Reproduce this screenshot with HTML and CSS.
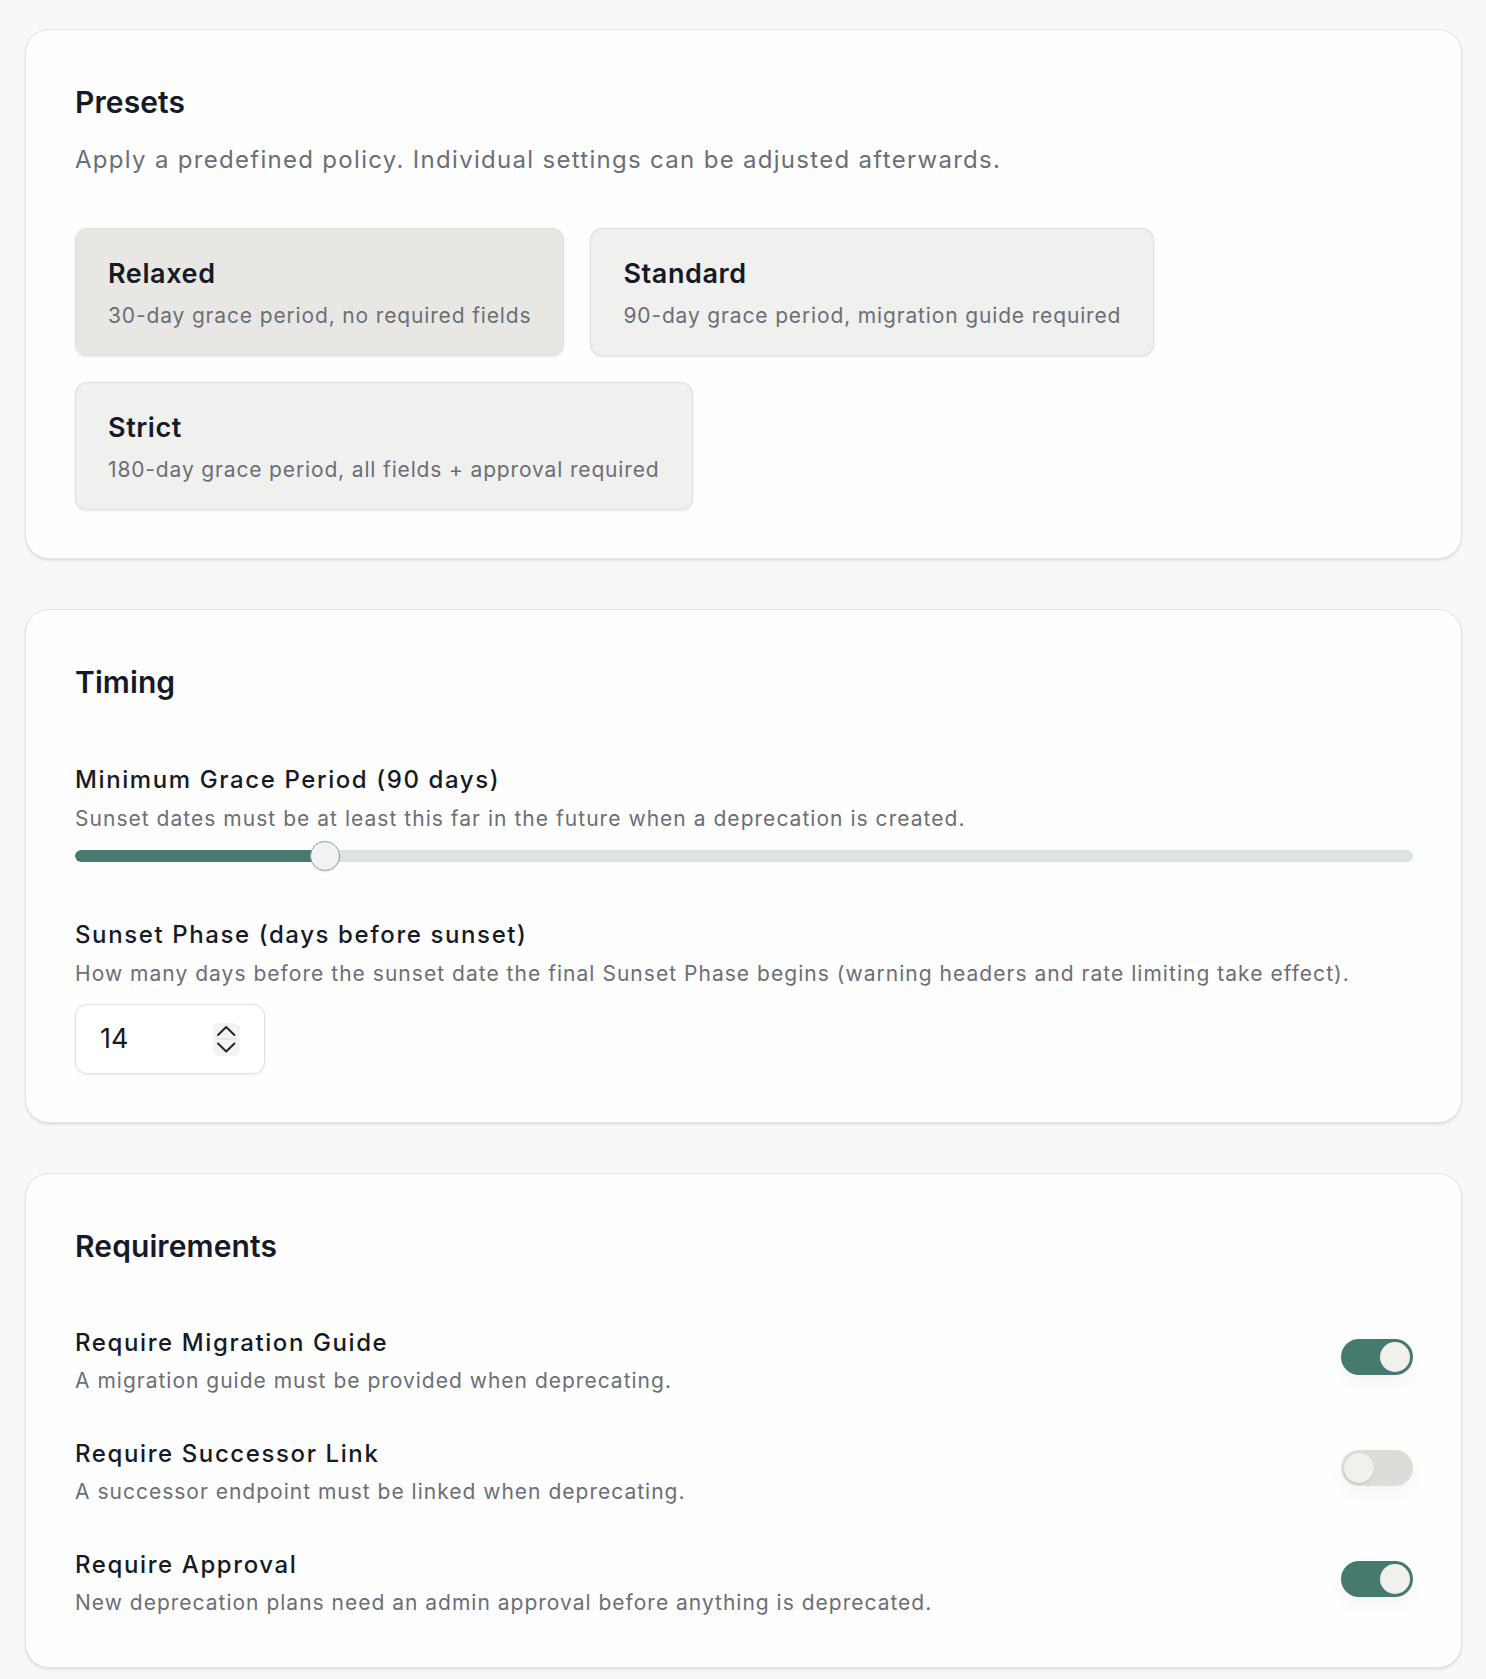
FILE: index.html
```html
<!DOCTYPE html>
<html lang="en">
<head>
<meta charset="utf-8">
<title>Deprecation policy</title>
<link rel="stylesheet" href="styles.css">
</head>
<body>
<main class="page">
  <section class="card">
    <h2 class="card-title">Presets</h2>
    <p class="card-desc">Apply a predefined policy. Individual settings can be adjusted afterwards.</p>
    <div class="presets">
      <button class="preset is-active" type="button">
        <span class="preset-name">Relaxed</span>
        <span class="preset-desc">30-day grace period, no required fields</span>
      </button>
      <button class="preset" type="button">
        <span class="preset-name">Standard</span>
        <span class="preset-desc">90-day grace period, migration guide required</span>
      </button>
      <button class="preset" type="button">
        <span class="preset-name">Strict</span>
        <span class="preset-desc">180-day grace period, all fields + approval required</span>
      </button>
    </div>
  </section>

  <section class="card">
    <h2 class="card-title">Timing</h2>
    <div class="fields">
      <div class="field">
        <div class="field-label">Minimum Grace Period (90 days)</div>
        <div class="field-desc">Sunset dates must be at least this far in the future when a deprecation is created.</div>
        <div class="slider">
          <div class="track"><div class="fill" style="width: 18.7%"></div></div>
          <div class="thumb" style="left: calc(18.7% - 15px)"></div>
        </div>
      </div>
      <div class="field">
        <div class="field-label">Sunset Phase (days before sunset)</div>
        <div class="field-desc">How many days before the sunset date the final Sunset Phase begins (warning headers and rate limiting take effect).</div>
        <div class="number-input">
          <span class="number-value">14</span>
          <span class="spinner">
            <svg width="27" height="33" viewBox="0 0 27 33" aria-hidden="true">
              <path d="M5 12 L13.2 4 L21.4 12" fill="none" stroke="#23262f" stroke-width="2" stroke-linecap="round" stroke-linejoin="round"/>
              <path d="M3.5 16 H23.5" stroke="#dedede" stroke-width="1"/>
              <path d="M5 20.5 L13.2 28.5 L21.4 20.5" fill="none" stroke="#23262f" stroke-width="2" stroke-linecap="round" stroke-linejoin="round"/>
            </svg>
          </span>
        </div>
      </div>
    </div>
  </section>

  <section class="card">
    <h2 class="card-title">Requirements</h2>
    <div class="rows">
      <div class="toggle-row">
        <div class="row-text">
          <div class="field-label">Require Migration Guide</div>
          <div class="row-desc">A migration guide must be provided when deprecating.</div>
        </div>
        <span class="toggle is-on"><span class="knob"></span></span>
      </div>
      <div class="toggle-row">
        <div class="row-text">
          <div class="field-label">Require Successor Link</div>
          <div class="row-desc">A successor endpoint must be linked when deprecating.</div>
        </div>
        <span class="toggle is-off"><span class="knob"></span></span>
      </div>
      <div class="toggle-row">
        <div class="row-text">
          <div class="field-label">Require Approval</div>
          <div class="row-desc">New deprecation plans need an admin approval before anything is deprecated.</div>
        </div>
        <span class="toggle is-on"><span class="knob"></span></span>
      </div>
    </div>
  </section>
</main>
</body>
</html>
```

FILE: styles.css
```css
* { box-sizing: border-box; }

body {
  margin: 0;
  background: #f8f8f7;
  font-family: Inter, "Noto Sans", "Liberation Sans", sans-serif;
  color: #161a26;
}

.page {
  padding: 29px 24px 24px 25px;
  display: flex;
  flex-direction: column;
  gap: 50px;
}

.card {
  background: #fefefe;
  border: 1px solid #e3e3e1;
  border-radius: 24px;
  padding: 50px 48px 48px 49px;
  box-shadow: 0 2px 3px rgba(0, 0, 0, 0.07), 0 1px 2px rgba(0, 0, 0, 0.04);
}

.card-title {
  margin: 0;
  font-size: 30px;
  line-height: 45px;
  font-weight: 600;
  letter-spacing: 0.1px;
  color: #161a26;
}

.card-desc {
  margin: 17px 0 0;
  font-size: 24px;
  line-height: 36px;
  letter-spacing: 1.3px;
  color: #6b6e76;
}

.presets {
  margin-top: 50px;
  display: flex;
  flex-wrap: wrap;
  gap: 26px 26px;
}

.preset {
  display: flex;
  flex-direction: column;
  align-items: flex-start;
  padding: 25px 32px 24px;
  background: #f0f0ef;
  border: 1px solid #dfdfdc;
  border-radius: 12px;
  box-shadow: 0 1px 3px rgba(0, 0, 0, 0.09);
  font: inherit;
  text-align: left;
  cursor: pointer;
}

.preset.is-active {
  background: #e8e7e4;
}

.preset-name {
  font-size: 27px;
  line-height: 40.5px;
  font-weight: 600;
  letter-spacing: 0.6px;
  color: #161a26;
}

.preset-desc {
  margin-top: 5px;
  font-size: 21px;
  line-height: 31.5px;
  letter-spacing: 0.85px;
  color: #6b6e76;
}

.fields {
  margin-top: 57px;
  display: flex;
  flex-direction: column;
  gap: 46px;
}

.field-label {
  font-size: 24px;
  line-height: 36px;
  font-weight: 500;
  letter-spacing: 1.6px;
  color: #161a26;
}

.field-desc {
  margin-top: 5px;
  font-size: 21px;
  line-height: 31.5px;
  letter-spacing: 1.03px;
  color: #6b6e76;
}

.slider {
  margin-top: 6px;
  height: 30px;
  position: relative;
  display: flex;
  align-items: center;
}

.track {
  flex: 1;
  height: 12px;
  border-radius: 6px;
  background: #dce3e1;
  overflow: hidden;
}

.fill {
  height: 100%;
  background: #467a6e;
  border-radius: 6px;
}

.thumb {
  position: absolute;
  top: 0;
  width: 30px;
  height: 30px;
  border-radius: 50%;
  background: #f2f2f0;
  border: 1.5px solid #86a79f;
  box-shadow: 0 1px 2px rgba(0, 0, 0, 0.1);
}

.number-input {
  margin-top: 15px;
  width: 190px;
  height: 70px;
  display: flex;
  align-items: center;
  justify-content: space-between;
  padding: 0 24px 0 24px;
  background: #fff;
  border: 1px solid #e2e2e0;
  border-radius: 12px;
  box-shadow: 0 1px 3px rgba(0, 0, 0, 0.08);
}

.number-value {
  font-size: 27px;
  line-height: 40px;
  color: #161a26;
}

.spinner {
  display: flex;
  width: 27px;
  height: 33px;
  background: #f3f3f2;
  border-radius: 6px;
}

.rows {
  margin-top: 56px;
  display: flex;
  flex-direction: column;
  gap: 39.5px;
}

.toggle-row {
  display: flex;
  justify-content: space-between;
  align-items: flex-start;
  gap: 24px;
}

.row-desc {
  margin-top: 4px;
  font-size: 21px;
  line-height: 31.5px;
  letter-spacing: 1px;
  color: #6b6e76;
}

.toggle {
  flex: none;
  margin-top: 14px;
  width: 72px;
  height: 36px;
  border-radius: 18px;
  padding: 3px;
  display: flex;
  box-shadow: 0 8px 16px rgba(0, 0, 0, 0.04);
}

.toggle.is-on {
  background: #467a6e;
  justify-content: flex-end;
}

.toggle.is-off {
  background: #dcdcd8;
  justify-content: flex-start;
}

.knob {
  width: 30px;
  height: 30px;
  border-radius: 50%;
  background: #f0f0ed;
}

.toggle.is-off .knob {
  box-shadow: 0 1px 2px rgba(0, 0, 0, 0.15);
}
```
